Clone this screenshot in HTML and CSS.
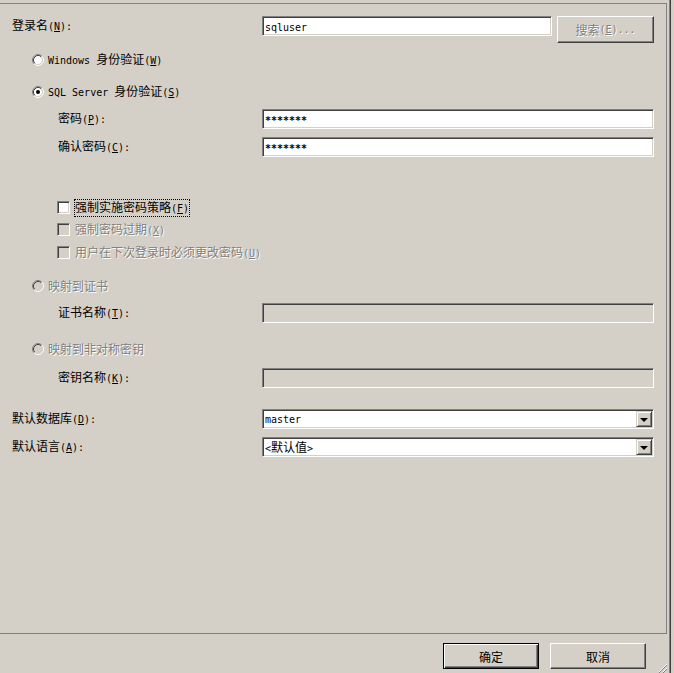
FILE: index.html
```html
<!DOCTYPE html>
<html lang="zh-CN">
<head>
<meta charset="utf-8">
<title>登录名 - 新建</title>
<link rel="stylesheet" href="styles.css">
</head>
<body>
<div class="window">
  <div class="main">
    <div class="panel">
      <div class="row">
        <div class="lab top">登录名<span class="m">(<u>N</u>):</span></div>
        <div class="tb tb-short"><span class="m">sqluser</span></div>
        <div class="btn search disabled">搜索<span class="m">(<u>E</u>)...</span></div>
      </div>

      <div class="row opt mt14">
        <svg class="radio" viewBox="0 0 12 12" width="12" height="12">
          <circle cx="6" cy="6" r="4.2" fill="#fff"/>
          <path d="M2.11 9.89 A5.5 5.5 0 0 1 9.89 2.11" fill="none" stroke="#808080"/>
          <path d="M2.82 9.18 A4.5 4.5 0 0 1 9.18 2.82" fill="none" stroke="#404040"/>
          <path d="M9.89 2.11 A5.5 5.5 0 0 1 2.11 9.89" fill="none" stroke="#fff"/>
          <path d="M9.18 2.82 A4.5 4.5 0 0 1 2.82 9.18" fill="none" stroke="#d4d0c8"/>
        </svg>
        <span class="txt"><span class="m">Windows </span>身份验证<span class="m">(<u>W</u>)</span></span>
      </div>

      <div class="row opt mt12">
        <svg class="radio" viewBox="0 0 12 12" width="12" height="12">
          <circle cx="6" cy="6" r="4.2" fill="#fff"/>
          <path d="M2.11 9.89 A5.5 5.5 0 0 1 9.89 2.11" fill="none" stroke="#808080"/>
          <path d="M2.82 9.18 A4.5 4.5 0 0 1 9.18 2.82" fill="none" stroke="#404040"/>
          <path d="M9.89 2.11 A5.5 5.5 0 0 1 2.11 9.89" fill="none" stroke="#fff"/>
          <path d="M9.18 2.82 A4.5 4.5 0 0 1 2.82 9.18" fill="none" stroke="#d4d0c8"/>
          <circle cx="6" cy="6" r="2" fill="#000"/>
        </svg>
        <span class="txt"><span class="m">SQL Server </span>身份验证<span class="m">(<u>S</u>)</span></span>
      </div>

      <div class="row mt7">
        <div class="lab sub">密码<span class="m">(<u>P</u>):</span></div>
        <div class="tb"><span class="m pw">*******</span></div>
      </div>

      <div class="row mt8">
        <div class="lab sub">确认密码<span class="m">(<u>C</u>):</span></div>
        <div class="tb"><span class="m pw">*******</span></div>
      </div>

      <div class="row chk mt41">
        <span class="cbox"></span>
        <span class="focus">强制实施密码策略<span class="m">(<u>F</u>)</span></span>
      </div>

      <div class="row chk mt2">
        <span class="cbox dis"></span>
        <span class="txt disabled">强制密码过期<span class="m">(<u>X</u>)</span></span>
      </div>

      <div class="row chk mt3">
        <span class="cbox dis"></span>
        <span class="txt disabled">用户在下次登录时必须更改密码<span class="m">(<u>U</u>)</span></span>
      </div>

      <div class="row opt mt13">
        <svg class="radio" viewBox="0 0 12 12" width="12" height="12">
          <circle cx="6" cy="6" r="4.2" fill="#d4d0c8"/>
          <path d="M2.11 9.89 A5.5 5.5 0 0 1 9.89 2.11" fill="none" stroke="#808080"/>
          <path d="M2.82 9.18 A4.5 4.5 0 0 1 9.18 2.82" fill="none" stroke="#404040"/>
          <path d="M9.89 2.11 A5.5 5.5 0 0 1 2.11 9.89" fill="none" stroke="#fff"/>
          <path d="M9.18 2.82 A4.5 4.5 0 0 1 2.82 9.18" fill="none" stroke="#d4d0c8"/>
        </svg>
        <span class="txt disabled">映射到证书</span>
      </div>

      <div class="row mt7">
        <div class="lab sub">证书名称<span class="m">(<u>T</u>):</span></div>
        <div class="tb off"></div>
      </div>

      <div class="row opt mt16">
        <svg class="radio" viewBox="0 0 12 12" width="12" height="12">
          <circle cx="6" cy="6" r="4.2" fill="#d4d0c8"/>
          <path d="M2.11 9.89 A5.5 5.5 0 0 1 9.89 2.11" fill="none" stroke="#808080"/>
          <path d="M2.82 9.18 A4.5 4.5 0 0 1 9.18 2.82" fill="none" stroke="#404040"/>
          <path d="M9.89 2.11 A5.5 5.5 0 0 1 2.11 9.89" fill="none" stroke="#fff"/>
          <path d="M9.18 2.82 A4.5 4.5 0 0 1 2.82 9.18" fill="none" stroke="#d4d0c8"/>
        </svg>
        <span class="txt disabled">映射到非对称密钥</span>
      </div>

      <div class="row mt9">
        <div class="lab sub">密钥名称<span class="m">(<u>K</u>):</span></div>
        <div class="tb off"></div>
      </div>

      <div class="row mt21">
        <div class="lab top">默认数据库<span class="m">(<u>D</u>):</span></div>
        <div class="tb combo"><span class="m">master</span><span class="dd"><span class="tri"></span></span></div>
      </div>

      <div class="row mt8">
        <div class="lab top">默认语言<span class="m">(<u>A</u>):</span></div>
        <div class="tb combo"><span><span class="m">&lt;</span>默认值<span class="m">&gt;</span></span><span class="dd"><span class="tri"></span></span></div>
      </div>
    </div>

    <div class="footer">
      <div class="btn default">确定</div>
      <div class="btn">取消</div>
      <svg class="grip" viewBox="0 0 12 12" width="12" height="12">
        <path d="M11 2 L2 11 M11 6 L6 11 M11 10 L10 11" stroke="#fff" stroke-width="1"/>
        <path d="M12 2 L2 12 M12 6 L6 12 M12 10 L10 12" stroke="#808080" stroke-width="1"/>
      </svg>
    </div>
  </div>
  <div class="edge"></div>
</div>
</body>
</html>
```

FILE: styles.css
```css
html, body {
  margin: 0;
  padding: 0;
}

body {
  width: 674px;
  height: 673px;
  overflow: hidden;
  background: #d4d0c8;
  font-family: "Noto Sans CJK SC", "Noto Sans", sans-serif;
  font-size: 12px;
  color: #000;
}

.window {
  display: flex;
  height: 673px;
}

.main {
  width: 667px;
  display: flex;
  flex-direction: column;
}

.panel {
  box-sizing: border-box;
  margin-top: 3px;
  width: 667px;
  height: 631px;
  border: 1px solid #808080;
  border-left: none;
  padding-top: 12px;
  display: flex;
  flex-direction: column;
}

.m {
  font-family: "DejaVu Sans Mono", "Liberation Mono", monospace;
  font-size: 10px;
}

u {
  text-decoration: underline;
  text-underline-offset: 1px;
}

.row {
  display: flex;
  align-items: center;
  height: 20px;
  line-height: 20px;
  flex: none;
}

.mt2 { margin-top: 2px; }
.mt3 { margin-top: 3px; }
.mt7 { margin-top: 7px; }
.mt8 { margin-top: 8px; }
.mt9 { margin-top: 9px; }
.mt12 { margin-top: 12px; }
.mt13 { margin-top: 13px; }
.mt14 { margin-top: 14px; }
.mt16 { margin-top: 16px; }
.mt21 { margin-top: 21px; }
.mt41 { margin-top: 41px; }

.lab {
  box-sizing: border-box;
  width: 262px;
  white-space: nowrap;
}

.lab.top { padding-left: 12px; }
.lab.sub { padding-left: 58px; }

.tb {
  box-sizing: border-box;
  width: 392px;
  height: 20px;
  border: 1px solid;
  border-color: #808080 #fff #fff #808080;
  box-shadow: inset 1px 1px 0 #404040, inset -1px -1px 0 #d4d0c8;
  background: #fff;
  padding-left: 2px;
  line-height: 17px;
  white-space: nowrap;
  overflow: hidden;
}

.tb-short { width: 290px; }

.tb.off { background: #d4d0c8; }

.pw {
  font-weight: bold;
  letter-spacing: 0;
}

.combo {
  display: flex;
  align-items: center;
  padding-right: 1px;
}

.dd {
  box-sizing: border-box;
  margin-left: auto;
  width: 16px;
  height: 16px;
  border: 1px solid;
  border-color: #d4d0c8 #404040 #404040 #d4d0c8;
  box-shadow: inset 1px 1px 0 #fff, inset -1px -1px 0 #808080;
  background: #d4d0c8;
  display: flex;
  align-items: center;
  justify-content: center;
}

.tri {
  width: 0;
  height: 0;
  border-left: 4px solid transparent;
  border-right: 4px solid transparent;
  border-top: 4px solid #000;
  margin-top: 1px;
}

.btn {
  box-sizing: border-box;
  width: 96px;
  height: 26px;
  border: 1px solid;
  border-color: #fff #404040 #404040 #fff;
  box-shadow: inset -1px -1px 0 #808080;
  background: #d4d0c8;
  display: flex;
  align-items: center;
  justify-content: center;
  white-space: nowrap;
}

.btn.search {
  width: 97px;
  height: 27px;
  margin-left: 5px;
  align-self: flex-start;
  color: #808080;
  text-shadow: 1px 1px 0 #fff;
}

.btn.default {
  border: 1px solid #000;
  box-shadow: inset 1px 1px 0 #fff, inset -1px -1px 0 #404040, inset -2px -2px 0 #808080;
}

.opt {
  padding-left: 32px;
}

.radio {
  display: block;
  flex: none;
  margin-right: 4px;
}

.txt {
  white-space: nowrap;
}

.disabled {
  color: #808080;
  text-shadow: 1px 1px 0 #fff;
}

.chk {
  padding-left: 57px;
}

.cbox {
  box-sizing: border-box;
  flex: none;
  width: 13px;
  height: 13px;
  border: 1px solid;
  border-color: #808080 #fff #fff #808080;
  box-shadow: inset 1px 1px 0 #404040, inset -1px -1px 0 #d4d0c8;
  background: #fff;
  margin-right: 4px;
  margin-top: -1px;
}

.cbox.dis { background: #d4d0c8; }

.chk .txt { margin-left: 1px; }

.focus {
  border: 1px dotted #000;
  line-height: 14px;
  padding: 0;
  white-space: nowrap;
}

.footer {
  position: relative;
  flex: 1;
  display: flex;
  justify-content: flex-end;
  align-items: flex-start;
  gap: 11px;
  padding-top: 9px;
  padding-right: 21px;
}

.grip {
  position: absolute;
  right: -2px;
  bottom: 0;
}

.edge {
  width: 7px;
  box-sizing: border-box;
  border-left: 2px solid #d4d0c8;
  position: relative;
}

.edge::before {
  content: "";
  display: block;
  width: 2px;
  height: 673px;
  background: linear-gradient(to right, #808080 0 1px, #404040 1px 2px);
}
```
